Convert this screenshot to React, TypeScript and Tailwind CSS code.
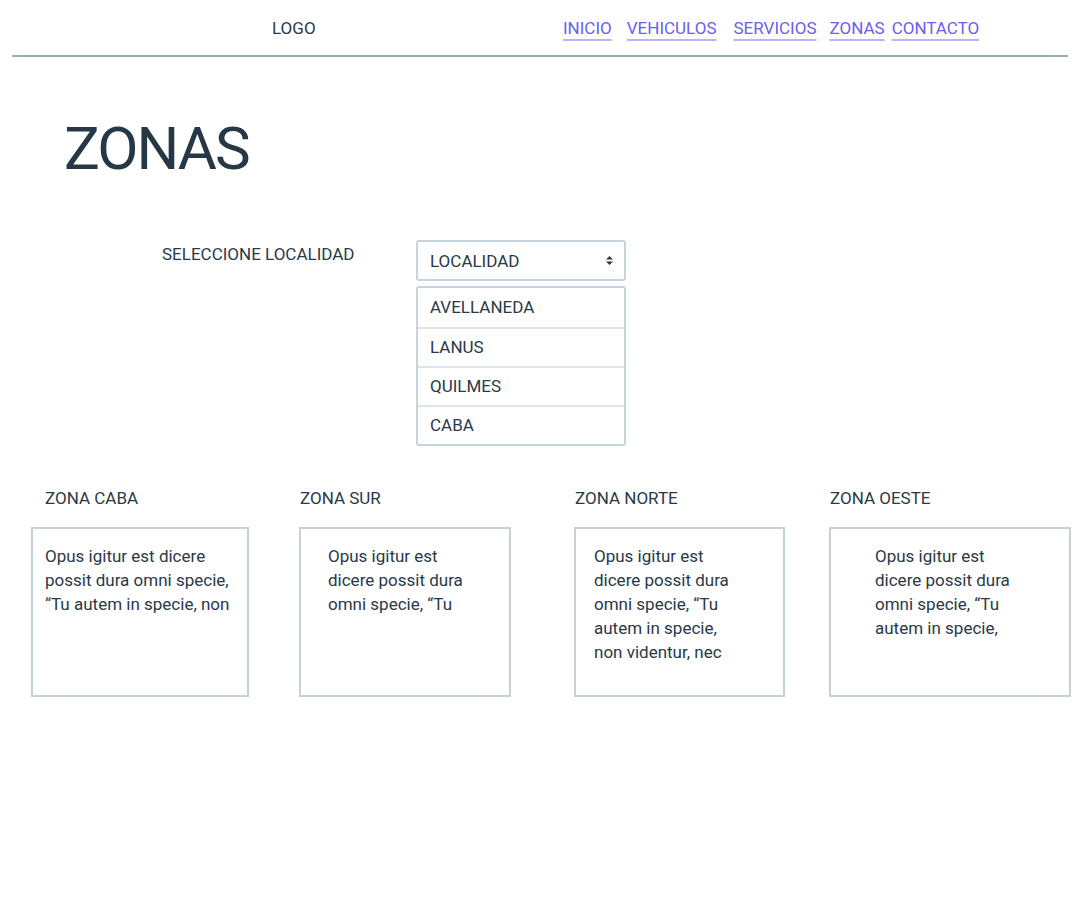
import React from "react";

const links = [
  { label: "INICIO", ml: "ml-0" },
  { label: "VEHICULOS", ml: "ml-[15px]" },
  { label: "SERVICIOS", ml: "ml-[17px]" },
  { label: "ZONAS", ml: "ml-[13px]" },
  { label: "CONTACTO", ml: "ml-[7px]" },
];

const localidades = ["AVELLANEDA", "LANUS", "QUILMES", "CABA"];

const zonas = [
  {
    title: "ZONA CABA",
    col: "ml-[31px] w-[218px]",
    titlePad: "pl-[14px]",
    textPad: "pl-[12px]",
    lines: ["Opus igitur est dicere", "possit dura omni specie,", "“Tu autem in specie, non"],
  },
  {
    title: "ZONA SUR",
    col: "ml-[50px] w-[212px]",
    titlePad: "pl-[1px]",
    textPad: "pl-[27px]",
    lines: ["Opus igitur est", "dicere possit dura", "omni specie, “Tu"],
  },
  {
    title: "ZONA NORTE",
    col: "ml-[63px] w-[211px]",
    titlePad: "pl-[1px]",
    textPad: "pl-[18px]",
    lines: ["Opus igitur est", "dicere possit dura", "omni specie, “Tu", "autem in specie,", "non videntur, nec"],
  },
  {
    title: "ZONA OESTE",
    col: "ml-[44px] w-[242px]",
    titlePad: "pl-[1px]",
    textPad: "pl-[44px]",
    lines: ["Opus igitur est", "dicere possit dura", "omni specie, “Tu", "autem in specie,"],
  },
];

export default function App() {
  return (
    <div className="min-h-[924px] bg-white text-[#2a3948] font-['Roboto','Liberation_Sans',sans-serif]">
      {/* Header */}
      <div className="px-3">
        <header className="flex h-[57px] items-center border-b-2 border-[#9aabbb]">
          <div className="ml-[260px] w-[291px] pt-[2px] text-[17px]">LOGO</div>
          <nav className="flex pt-[3px] text-[17px]">
            {links.map((l) => (
              <a
                key={l.label}
                href="#"
                className={`${l.ml} text-[#6a5ef0] underline decoration-[#bab4f7] decoration-2 underline-offset-[5px]`}
              >
                {l.label}
              </a>
            ))}
          </nav>
        </header>
      </div>

      {/* Title */}
      <h1 className="ml-[64px] mt-[62px] text-[60px] leading-none tracking-[-2px] text-[#263746]">ZONAS</h1>

      {/* Selector */}
      <section className="mt-[61px] flex">
        <div className="ml-[162px] w-[254px] pt-[2px] text-[17px]">SELECCIONE LOCALIDAD</div>
        <div className="w-[210px]">
          <div className="flex h-[41px] items-center justify-between rounded-[3px] border-2 border-[#c9d3de] pl-[12px] pr-[11px] text-[17px]">
            <span className="pt-[2px]">LOCALIDAD</span>
            <svg width="7" height="9" viewBox="0 0 7 9">
              <path d="M3.5 0 L7 3.5 H0 Z" fill="#2a3948" />
              <path d="M0 5.5 H7 L3.5 9 Z" fill="#2a3948" />
            </svg>
          </div>
          <ul className="mt-[5px] rounded-[3px] border-2 border-[#c9d3de] text-[17px]">
            {localidades.map((loc, i) => (
              <li
                key={loc}
                className={`flex h-[39px] items-center pl-[12px] ${i > 0 ? "border-t-2 border-[#dfe4eb]" : ""}`}
              >
                {loc}
              </li>
            ))}
          </ul>
        </div>
      </section>

      {/* Zonas */}
      <section className="mt-[40px] flex">
        {zonas.map((z) => (
          <div key={z.title} className={z.col}>
            <h3 className={`${z.titlePad} text-[17px] leading-[24px]`}>{z.title}</h3>
            <div className={`mt-[17px] h-[170px] border-2 border-[#c4d0dc] pt-[15px] ${z.textPad} text-[17px] leading-[24px]`}>
              {z.lines.map((line) => (
                <div key={line}>{line}</div>
              ))}
            </div>
          </div>
        ))}
      </section>
    </div>
  );
}
